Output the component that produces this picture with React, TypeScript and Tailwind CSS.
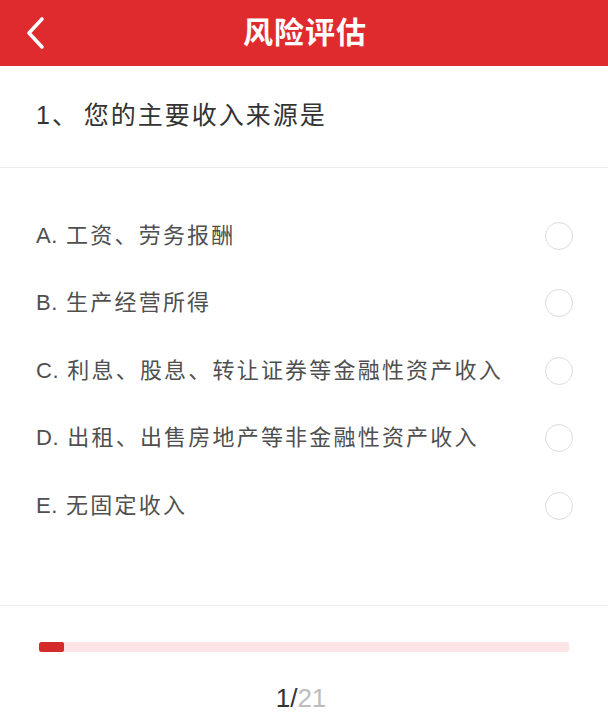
import React from "react";

const options = [
  "A. 工资、劳务报酬",
  "B. 生产经营所得",
  "C. 利息、股息、转让证券等金融性资产收入",
  "D. 出租、出售房地产等非金融性资产收入",
  "E. 无固定收入",
];

export default function App() {
  return (
    <div
      className="w-[608px] h-[723px] bg-white overflow-hidden flex flex-col"
      style={{ fontFamily: '"Liberation Sans", "Noto Sans CJK SC", sans-serif' }}
    >
      <header className="h-[66px] shrink-0 bg-[#df2b2d] grid grid-cols-[76px_1fr_76px] items-center">
        <div className="flex items-center pl-[24px]">
          <svg width="22" height="34" viewBox="0 0 22 34" fill="none">
            <path d="M18 3 L5 17 L18 31" stroke="#fff" strokeWidth="3.6" strokeLinecap="round" strokeLinejoin="round" />
          </svg>
        </div>
        <div className="text-center text-white text-[30px] font-bold leading-none tracking-[1px] pl-[2px]">
          风险评估
        </div>
        <div />
      </header>

      <div className="h-[102px] shrink-0 border-b border-[#ececec] flex items-center pl-[36px] pb-[2px]">
        <span className="text-[25px] text-[#333] tracking-[2px] leading-none">
          1、<span className="ml-[-4px]"> 您的主要收入来源是</span>
        </span>
      </div>

      <div className="shrink-0 pt-[34px] pb-[65px] border-b border-[#ececec]">
        {options.map((o) => {
          const letter = o.slice(0, 2);
          const rest = o.slice(2);
          return (
            <div key={o} className="h-[67.5px] flex items-center justify-between pl-[36px] pr-[35px]">
              <span className="text-[22px] text-[#4f4f4f] leading-none">
                <span className="tracking-[0.5px]">{letter}</span>
                <span className="tracking-[2.2px]">{rest}</span>
              </span>
              <span className="w-[28px] h-[28px] rounded-full border-[1.5px] border-[#dcdcdc]" />
            </div>
          );
        })}
      </div>

      <div className="flex-1 flex flex-col items-center">
        <div className="mt-[36px] w-[530px] h-[10px] bg-[#fde4e6] rounded-[2px] overflow-hidden">
          <div className="h-full bg-[#d42a2a] rounded-[2px]" style={{ width: `${(25 / 530) * 100}%` }} />
        </div>
        <div className="mt-[33px] text-[26px] leading-none pr-[6px]">
          <span className="text-[#333]">1/</span>
          <span className="text-[#bdbdbd]">21</span>
        </div>
      </div>
    </div>
  );
}
